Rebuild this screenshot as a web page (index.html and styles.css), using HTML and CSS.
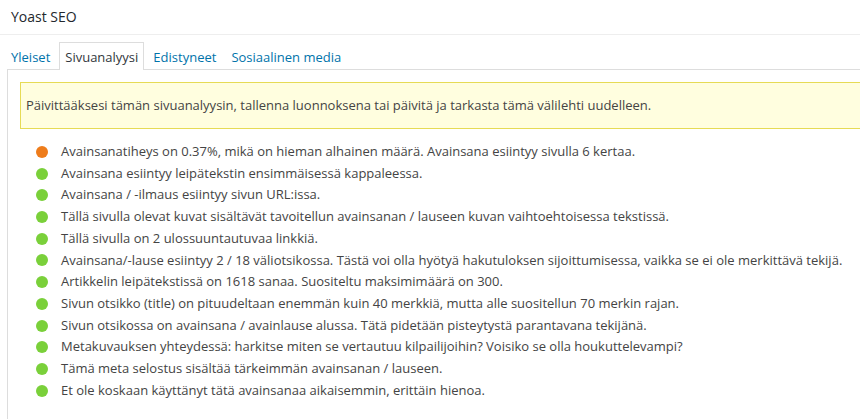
FILE: index.html
```html
<!DOCTYPE html>
<html lang="fi">
<head>
  <meta charset="UTF-8" />
  <title>Yoast SEO</title>
  <link rel="stylesheet" href="styles.css">
</head>
<body>
  <div class="postbox">
    <h2 class="hndle">Yoast SEO</h2>

    <div class="inside">
      <ul class="metabox-tabs">
        <li><a href="#">Yleiset</a></li>
        <li class="active"><a href="#">Sivuanalyysi</a></li>
        <li><a href="#">Edistyneet</a></li>
        <li><a href="#">Sosiaalinen media</a></li>
      </ul>

      <div class="tab-panel">
        <div class="notice">Päivittääksesi tämän sivuanalyysin, tallenna luonnoksena tai päivitä ja tarkasta tämä välilehti uudelleen.</div>

        <ul class="analysis">
          <li><span class="dot ok"></span>Avainsanatiheys on 0.37%, mikä on hieman alhainen määrä. Avainsana esiintyy sivulla 6 kertaa.</li>
          <li><span class="dot good"></span>Avainsana esiintyy leipätekstin ensimmäisessä kappaleessa.</li>
          <li><span class="dot good"></span>Avainsana / -ilmaus esiintyy sivun URL:issa.</li>
          <li><span class="dot good"></span>Tällä sivulla olevat kuvat sisältävät tavoitellun avainsanan / lauseen kuvan vaihtoehtoisessa tekstissä.</li>
          <li><span class="dot good"></span>Tällä sivulla on 2 ulossuuntautuvaa linkkiä.</li>
          <li><span class="dot good"></span>Avainsana/-lause esiintyy 2 / 18 väliotsikossa. Tästä voi olla hyötyä hakutuloksen sijoittumisessa, vaikka se ei ole merkittävä tekijä.</li>
          <li><span class="dot good"></span>Artikkelin leipätekstissä on 1618 sanaa. Suositeltu maksimimäärä on 300.</li>
          <li><span class="dot good"></span>Sivun otsikko (title) on pituudeltaan enemmän kuin 40 merkkiä, mutta alle suositellun 70 merkin rajan.</li>
          <li><span class="dot good"></span>Sivun otsikossa on avainsana / avainlause alussa. Tätä pidetään pisteytystä parantavana tekijänä.</li>
          <li><span class="dot good"></span>Metakuvauksen yhteydessä: harkitse miten se vertautuu kilpailijoihin? Voisiko se olla houkuttelevampi?</li>
          <li><span class="dot good"></span>Tämä meta selostus sisältää tärkeimmän avainsanan / lauseen.</li>
          <li><span class="dot good"></span>Et ole koskaan käyttänyt tätä avainsanaa aikaisemmin, erittäin hienoa.</li>
        </ul>
      </div>
    </div>
  </div>
</body>
</html>
```

FILE: styles.css
```css
body {
  margin: 0;
  padding: 0;
  background-color: #fff;
  color: #444;
  font-family: 'Open Sans', 'Noto Sans', sans-serif;
  font-size: 13px;
  overflow: hidden;
}

.postbox {
  width: 920px;
  background-color: #fff;
}

.hndle {
  margin: 0;
  padding: 0 11px;
  height: 34px;
  line-height: 34px;
  font-size: 14px;
  font-weight: 400;
  color: #23282d;
  border-bottom: 1px solid #eee;
}

.inside {
  padding: 7px 0 0 7px;
}

.metabox-tabs {
  display: flex;
  margin: 0 0 0 -2px;
  padding: 0;
  list-style: none;
  position: relative;
  z-index: 1;
}

.metabox-tabs li {
  margin-right: 3px;
  border: 1px solid transparent;
  border-bottom: none;
}

.metabox-tabs li a {
  display: block;
  padding: 0 5px;
  height: 27px;
  line-height: 28px;
  color: #0073aa;
  text-decoration: none;
}

.metabox-tabs li.active {
  border-color: #ddd;
  background-color: #fff;
}

.metabox-tabs li.active a {
  color: #32373c;
}

.tab-panel {
  margin-top: -1px;
  border: 1px solid #ddd;
  height: 341px;
  padding: 12px 12px 0 12px;
}

.notice {
  background-color: #fffedf;
  border: 1px solid #e6db55;
  padding: 0 5px;
  height: 45px;
  line-height: 44px;
  color: #444;
}

.analysis {
  margin: 12px 0 0 0;
  padding: 0 0 0 16px;
  list-style: none;
}

.analysis li {
  display: flex;
  align-items: center;
  height: 21.73px;
  line-height: 21.73px;
}

.dot {
  flex: none;
  width: 12px;
  height: 12px;
  border-radius: 50%;
  margin-right: 13px;
}

.dot.ok {
  background-color: #ee7c1b;
}

.dot.good {
  background-color: #7ad03a;
}
```
